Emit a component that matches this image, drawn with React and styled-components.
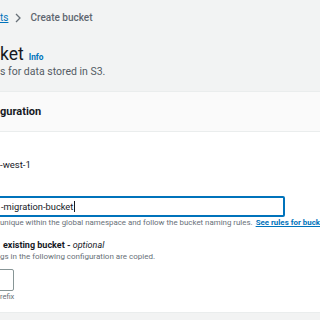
import React from "react";
import styled, { createGlobalStyle } from "styled-components";

const GlobalStyle = createGlobalStyle`
  html, body { margin: 0; padding: 0; background: #f2f3f3; }
  body { font-family: Roboto, "Noto Sans", sans-serif; color: #16191f; overflow: hidden; }
  * { box-sizing: border-box; }
`;

const Page = styled.div`
  width: 320px;
  height: 320px;
  overflow: hidden;
  display: flex;
  flex-direction: column;
`;

const TopArea = styled.div`
  height: 91px;
  display: flex;
  flex-direction: column;
  padding-top: 12px;
`;

const Breadcrumbs = styled.nav`
  display: flex;
  align-items: center;
  font-size: 10px;
  line-height: 12px;
  height: 12px;
`;

const CrumbLink = styled.a`
  color: #0073bb;
  text-decoration: underline;
  text-underline-offset: 1px;
`;

const Chevron = styled.svg`
  width: 6px;
  height: 10px;
  margin: 0 9px 0 7px;
`;

const CrumbCurrent = styled.span`
  color: #5f6670;
  font-weight: 500;
`;

const TitleRow = styled.div`
  display: flex;
  align-items: baseline;
  gap: 5px;
  margin-top: 18px;
  height: 24px;
`;

const Title = styled.h1`
  margin: 0;
  font-size: 17.5px;
  font-weight: 400;
  line-height: 24px;
  color: #16191f;
`;

const InfoLink = styled.a`
  color: #0073bb;
  font-size: 8.3px;
  font-weight: 700;
  text-decoration: none;
`;

const Description = styled.p`
  margin: 0;
  font-size: 10.5px;
  line-height: 12px;
  color: #545b64;
`;

const Container = styled.section`
  background: #ffffff;
  border-top: 1px solid #eaeded;
  border-bottom: 1px solid #eaeded;
  height: 222px;
  display: flex;
  flex-direction: column;
`;

const ContainerHeader = styled.header`
  background: #fafafa;
  border-bottom: 1px solid #eaeded;
  height: 40px;
  display: flex;
  align-items: center;
`;

const Heading = styled.h2`
  margin: 0;
  font-size: 11px;
  font-weight: 700;
  line-height: 14px;
  color: #16191f;
`;

const Body = styled.div`
  display: flex;
  flex-direction: column;
  padding-top: 27px;
`;

const Value = styled.div`
  font-size: 9.5px;
  line-height: 12px;
  color: #16191f;
`;

const LabelRow = styled.div`
  display: flex;
  align-items: center;
  height: 8px;
  margin-top: ${(p) => p.$top}px;
`;

const LabelInfo = styled.a`
  color: #0073bb;
  font-size: 8px;
  font-weight: 700;
  margin-left: ${(p) => p.$shift}px;
`;

const InputBox = styled.div`
  margin-top: 5px;
  width: 287px;
  margin-left: -2px;
  height: 21px;
  border: 2px solid #0073bb;
  border-radius: 2px;
  display: flex;
  align-items: center;
  padding-left: 1px;
  font-size: 9.3px;
  color: #16191f;
`;

const Caret = styled.span`
  display: inline-block;
  width: 1px;
  height: 11px;
  background: #16191f;
  margin-left: 1px;
`;

const Helper = styled.div`
  margin-top: 0;
  font-size: 7.9px;
  line-height: 12px;
  color: #687078;
  white-space: nowrap;
  display: flex;
  gap: 3px;
`;

const HelperLink = styled.a`
  color: #0073bb;
  font-weight: 700;
  text-decoration: underline;
`;

const FieldLabel = styled.div`
  margin-top: 10px;
  font-size: 9px;
  line-height: 12px;
  font-weight: 700;
  color: #16191f;
  white-space: nowrap;
  padding-left: 3px;
`;

const Optional = styled.i`
  font-weight: 400;
`;

const FieldDesc = styled.div`
  font-size: 8px;
  line-height: 11px;
  color: #687078;
  white-space: nowrap;
`;

const GhostButton = styled.button`
  margin-top: 7px;
  margin-left: -20px;
  width: 34px;
  height: 22px;
  border: 1.5px solid #879596;
  border-radius: 2px;
  background: #ffffff;
`;

const Constraint = styled.div`
  margin-top: 1px;
  font-size: 7.5px;
  line-height: 10px;
  color: #687078;
`;

export default function App() {
  return (
    <Page>
      <GlobalStyle />
      <TopArea>
        <Breadcrumbs>
          <CrumbLink href="#">ts</CrumbLink>
          <Chevron viewBox="0 0 6 10">
            <path d="M1 1l4 4-4 4" fill="none" stroke="#687078" strokeWidth="1.3" />
          </Chevron>
          <CrumbCurrent>Create bucket</CrumbCurrent>
        </Breadcrumbs>
        <TitleRow>
          <Title>ket</Title>
          <InfoLink href="#">Info</InfoLink>
        </TitleRow>
        <Description>s for data stored in S3.</Description>
      </TopArea>
      <Container>
        <ContainerHeader>
          <Heading>guration</Heading>
        </ContainerHeader>
        <Body>
          <Value>-west-1</Value>
          <LabelRow $top={12}>
            <LabelInfo $shift={-15}>Info</LabelInfo>
          </LabelRow>
          <InputBox>
            -migration-bucket
            <Caret />
          </InputBox>
          <Helper>
            <span>unique within the global namespace and follow the bucket naming rules.</span>
            <HelperLink href="#">See rules for bucket naming</HelperLink>
          </Helper>
          <FieldLabel>
            existing bucket - <Optional>optional</Optional>
          </FieldLabel>
          <FieldDesc>gs in the following configuration are copied.</FieldDesc>
          <GhostButton aria-label="Choose bucket" />
          <Constraint>refix</Constraint>
        </Body>
      </Container>
    </Page>
  );
}
